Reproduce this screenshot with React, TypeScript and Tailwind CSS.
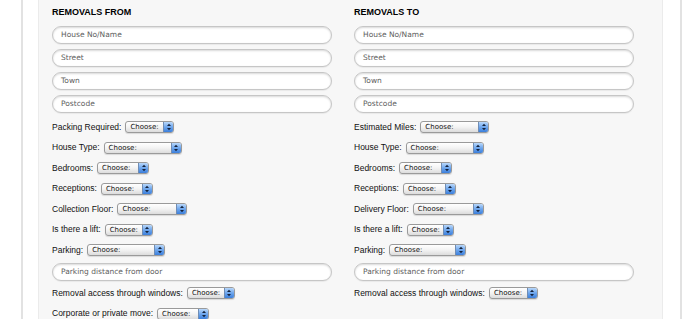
import React from 'react';

type Row = { label: string; w: number };

const Field: React.FC<{ placeholder: string }> = ({ placeholder }) => (
  <div className="h-[18px] w-[280px] rounded-full border border-[#c6c6c6] bg-white shadow-[inset_0_1px_2px_rgba(0,0,0,0.15),0_1px_1px_rgba(0,0,0,0.06)] flex items-center pl-[8px] text-[7.5px] text-[#5e5e5e] font-['DejaVu_Sans',sans-serif]">
    {placeholder}
  </div>
);

const Choose: React.FC<{ cls: string }> = ({ cls }) => (
  <div className={`${cls} h-[12px] flex rounded-[3px] border border-[#9a9a9a] bg-gradient-to-b from-white via-[#f3f3f3] to-[#dcdcdc] shadow-[0_1px_1px_rgba(0,0,0,0.12)] overflow-hidden`}>
    <span className="flex-1 pl-[4px] text-[7px] leading-[10px] text-[#111] font-['DejaVu_Sans',sans-serif]">Choose:</span>
    <span className="w-[10px] h-full border-l border-[#6f8db5] bg-gradient-to-b from-[#b9d8fb] via-[#6ea6ec] to-[#3b7fdc] flex items-center justify-center">
      <svg width="6" height="8" viewBox="0 0 6 8">
        <polygon points="3,0.8 5,3 1,3" fill="#14233d" />
        <polygon points="3,7.2 5,5 1,5" fill="#14233d" />
      </svg>
    </span>
  </div>
);

// widths written out in full so tailwind picks them up
const widths: Record<number, string> = {
  47: 'w-[47px]',
  48: 'w-[48px]',
  49: 'w-[49px]',
  52: 'w-[52px]',
  53: 'w-[53px]',
  69: 'w-[69px]',
  70: 'w-[70px]',
  71: 'w-[71px]',
  77: 'w-[77px]',
  78: 'w-[78px]',
};

const SelectRow: React.FC<Row> = ({ label, w }) => (
  <div className="h-[20.5px] flex items-center text-[8.5px] text-[#111] font-['Liberation_Sans',Arial,sans-serif]">
    <span className="mr-[4px]">{label}</span>
    <Choose cls={widths[w]} />
  </div>
);

const Column: React.FC<{ title: string; top: Row[]; bottom: Row[] }> = ({ title, top, bottom }) => (
  <div className="w-[280px] flex flex-col">
    <h2 className="h-[11px] mt-[7px] text-[9px] leading-[11px] font-bold text-black font-['Liberation_Sans',Arial,sans-serif]">
      {title}
    </h2>
    <div className="mt-[8px] flex flex-col gap-[5px]">
      <Field placeholder="House No/Name" />
      <Field placeholder="Street" />
      <Field placeholder="Town" />
      <Field placeholder="Postcode" />
    </div>
    <div className="mt-[4px] flex flex-col">
      {top.map((r) => (
        <SelectRow key={r.label} {...r} />
      ))}
    </div>
    <div className="mt-[2.5px]">
      <Field placeholder="Parking distance from door" />
    </div>
    <div className="mt-[2px] flex flex-col">
      {bottom.map((r) => (
        <SelectRow key={r.label} {...r} />
      ))}
    </div>
  </div>
);

const fromTop: Row[] = [
  { label: 'Packing Required:', w: 49 },
  { label: 'House Type:', w: 78 },
  { label: 'Bedrooms:', w: 52 },
  { label: 'Receptions:', w: 52 },
  { label: 'Collection Floor:', w: 70 },
  { label: 'Is there a lift:', w: 48 },
  { label: 'Parking:', w: 78 },
];

const fromBottom: Row[] = [
  { label: 'Removal access through windows:', w: 48 },
  { label: 'Corporate or private move:', w: 52 },
];

const toTop: Row[] = [
  { label: 'Estimated Miles:', w: 69 },
  { label: 'House Type:', w: 78 },
  { label: 'Bedrooms:', w: 53 },
  { label: 'Receptions:', w: 53 },
  { label: 'Delivery Floor:', w: 71 },
  { label: 'Is there a lift:', w: 47 },
  { label: 'Parking:', w: 77 },
];

const toBottom: Row[] = [{ label: 'Removal access through windows:', w: 49 }];

const App: React.FC = () => {
  return (
    <div className="w-[700px] h-[319px] bg-white overflow-hidden flex">
      <div className="ml-[21px] w-[661px] h-full border-x-2 border-[#e2e2e2] px-[15px] bg-white">
        <div className="w-[625px] h-full bg-[#f7f7f7] border-x border-[#ebebeb] pl-[13px] flex gap-[22px]">
          <Column title="REMOVALS FROM" top={fromTop} bottom={fromBottom} />
          <Column title="REMOVALS TO" top={toTop} bottom={toBottom} />
        </div>
      </div>
    </div>
  );
};

export default App;
